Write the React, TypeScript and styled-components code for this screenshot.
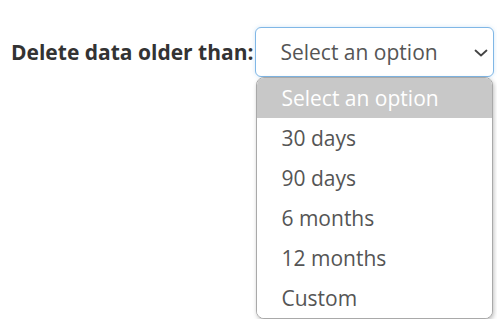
import React from "react";
import styled, { createGlobalStyle } from "styled-components";

const Global = createGlobalStyle`
  html, body { margin: 0; padding: 0; background: #ffffff; }
  body { font-family: "Open Sans", "Noto Sans", sans-serif; }
`;

const Page = styled.div`
  padding: 27px 0 0 11px;
`;

const Row = styled.div`
  display: flex;
  align-items: flex-start;
  gap: 2px;
`;

const Label = styled.label`
  font-weight: 700;
  font-size: 21px;
  line-height: 50px;
  color: #333333;
  white-space: nowrap;
`;

const SelectColumn = styled.div`
  display: flex;
  flex-direction: column;
  align-items: flex-start;
  width: 239px;
`;

const SelectBox = styled.div`
  box-sizing: border-box;
  width: 239px;
  height: 50px;
  border: 1px solid #80b7e6;
  border-radius: 6px;
  box-shadow: 0 0 4px rgba(128, 183, 230, 0.35);
  display: flex;
  align-items: center;
  justify-content: space-between;
  padding: 0 5px 0 24px;
  font-size: 21px;
  color: #555555;
  background: #ffffff;
`;

const Chevron = styled.svg`
  width: 14px;
  height: 8px;
  margin-top: 1px;
`;

const MenuList = styled.div`
  margin-left: 1px;
  width: 237px;
  box-sizing: border-box;
  background: #ffffff;
  border: 1px solid #a9a9a9;
  border-radius: 8px;
  overflow: hidden;
  box-shadow: 1px 2px 4px rgba(0, 0, 0, 0.25);
`;

const MenuItem = styled.div<{ $active?: boolean }>`
  height: 40px;
  display: flex;
  align-items: center;
  padding-left: 24px;
  font-size: 21px;
  color: ${(p) => (p.$active ? "#ffffff" : "#555555")};
  background: ${(p) => (p.$active ? "#c8c8c8" : "#ffffff")};
`;

const choices = ["Select an option", "30 days", "90 days", "6 months", "12 months", "Custom"];

export default function App() {
  return (
    <>
      <Global />
      <Page>
        <Row>
          <Label>Delete data older than:</Label>
          <SelectColumn>
            <SelectBox>
              <span>Select an option</span>
              <Chevron viewBox="0 0 14 8" fill="none">
                <path d="M1.5 1.5l5.5 5 5.5-5" stroke="#444" strokeWidth="1.8" strokeLinecap="round" strokeLinejoin="round" />
              </Chevron>
            </SelectBox>
            <MenuList>
              {choices.map((o, i) => (
                <MenuItem key={o} $active={i === 0}>{o}</MenuItem>
              ))}
            </MenuList>
          </SelectColumn>
        </Row>
      </Page>
    </>
  );
}
